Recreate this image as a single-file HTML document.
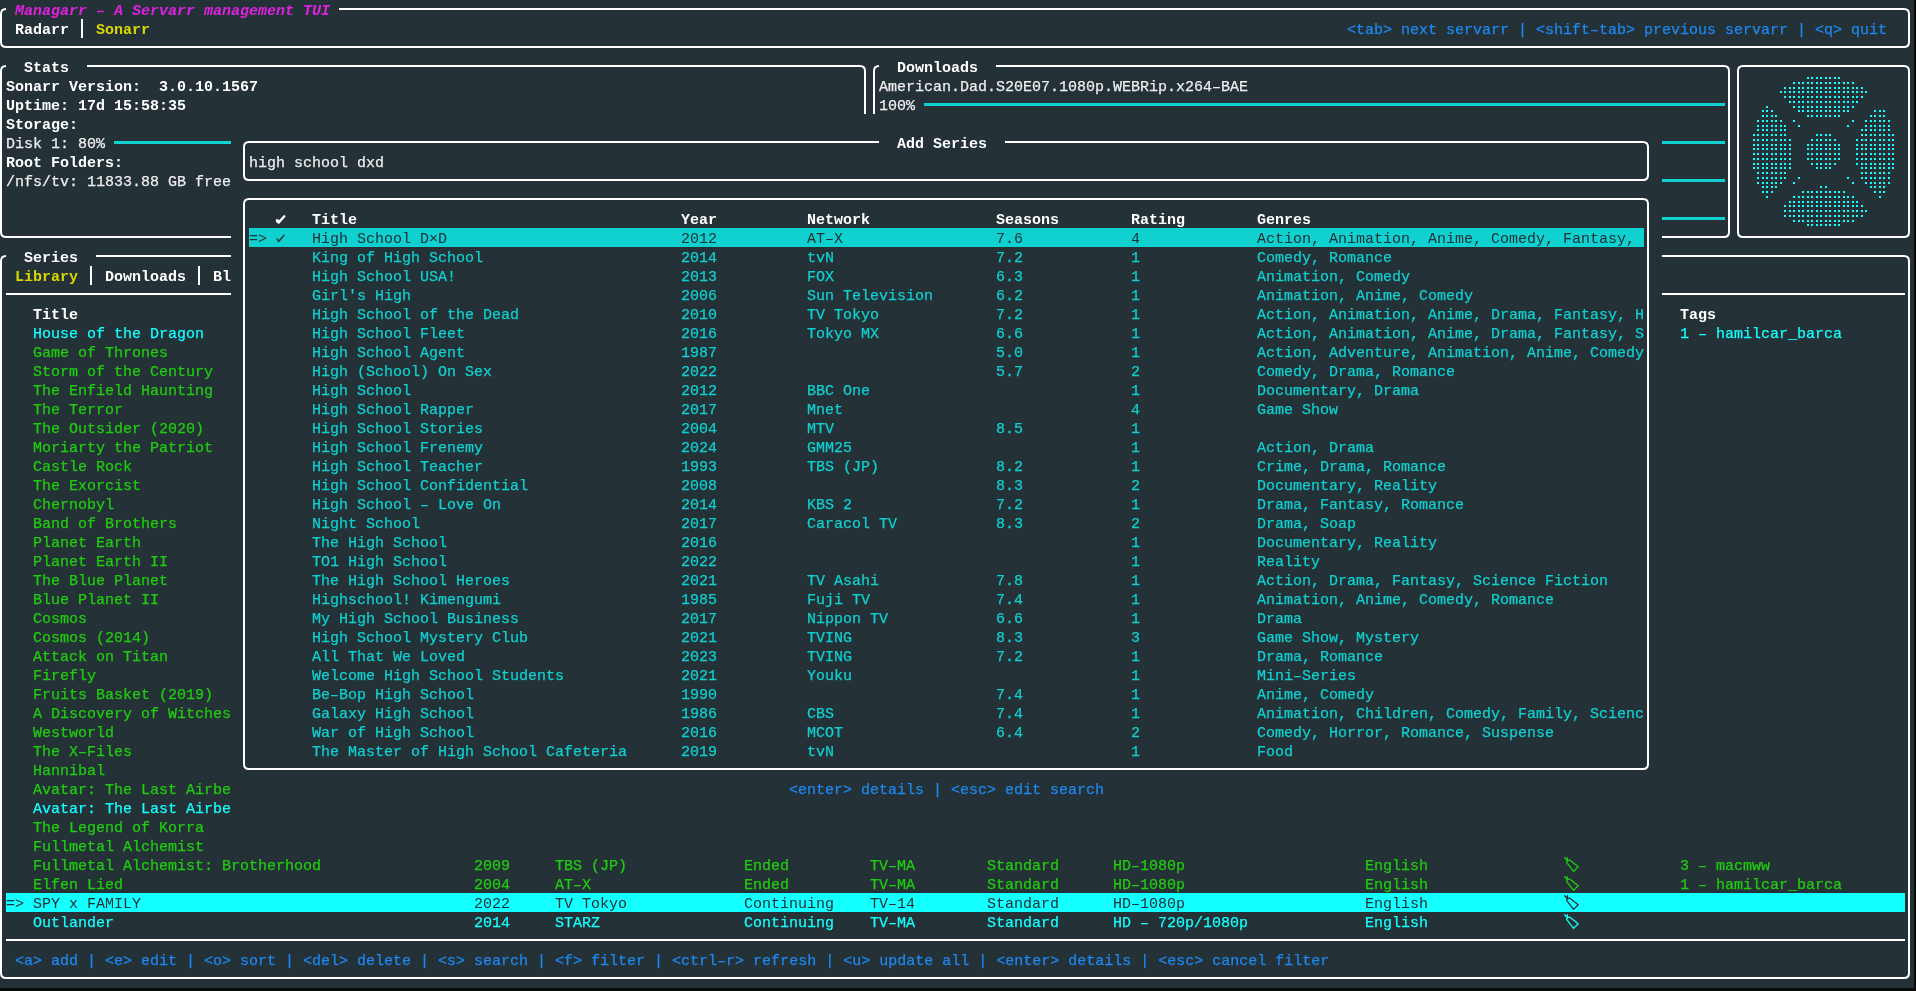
<!DOCTYPE html><html><head><meta charset="utf-8"><title>Managarr</title><style>
html,body{margin:0;padding:0;background:#0b0b0b;}
#s{position:relative;width:1916px;height:991px;overflow:hidden;background:#0b0b0b;}
#t{position:absolute;left:0;top:0;width:1914px;height:988px;background:#243137;overflow:hidden;}
.t{position:absolute;white-space:pre;font-family:"Liberation Mono",monospace;font-size:15px;line-height:19px;}
.t{-webkit-text-stroke:0.25px currentColor}.b{font-weight:bold;-webkit-text-stroke:0}.i{font-style:italic}.d{-webkit-text-stroke:0}
svg{position:absolute;left:0;top:0;}
.r{position:absolute}
#t{will-change:transform}
</style></head><body><div id="s"><div id="t">
<svg width="1914" height="988" viewBox="0 0 1914 988"><g stroke="#ffffff" stroke-width="2" fill="none"><path d="M6,9 H1904 Q1909,9 1909,14 V42 Q1909,47 1904,47 H6 Q1,47 1,42 V14 Q1,9 6,9 Z"/><path d="M82,19 V38"/><path d="M6,66 H860 Q865,66 865,71 V232 Q865,237 860,237 H6 Q1,237 1,232 V71 Q1,66 6,66 Z"/><path d="M879,66 H1724 Q1729,66 1729,71 V232 Q1729,237 1724,237 H879 Q874,237 874,232 V71 Q874,66 879,66 Z"/><path d="M1743,66 H1904 Q1909,66 1909,71 V232 Q1909,237 1904,237 H1743 Q1738,237 1738,232 V71 Q1738,66 1743,66 Z"/><path d="M6,256 H1904 Q1909,256 1909,261 V973 Q1909,978 1904,978 H6 Q1,978 1,973 V261 Q1,256 6,256 Z"/><path d="M91,266 V285"/><path d="M199,266 V285"/><path d="M6,294 H1905"/><path d="M6,940 H1905"/></g><rect x="114" y="141" width="747" height="3" fill="#10d0d0"/><rect x="924" y="103" width="801" height="3" fill="#10d0d0"/><rect x="924" y="141" width="801" height="3" fill="#10d0d0"/><rect x="924" y="179" width="801" height="3" fill="#10d0d0"/><rect x="924" y="217" width="801" height="3" fill="#10d0d0"/><g fill="#14ffff"><rect x="1807" y="77" width="2" height="2"/><rect x="1811" y="77" width="2" height="2"/><rect x="1816" y="77" width="2" height="2"/><rect x="1820" y="77" width="2" height="2"/><rect x="1825" y="77" width="2" height="2"/><rect x="1829" y="77" width="2" height="2"/><rect x="1834" y="77" width="2" height="2"/><rect x="1838" y="77" width="2" height="2"/><rect x="1793" y="82" width="2" height="2"/><rect x="1798" y="82" width="2" height="2"/><rect x="1802" y="82" width="2" height="2"/><rect x="1807" y="82" width="2" height="2"/><rect x="1811" y="82" width="2" height="2"/><rect x="1816" y="82" width="2" height="2"/><rect x="1820" y="82" width="2" height="2"/><rect x="1825" y="82" width="2" height="2"/><rect x="1829" y="82" width="2" height="2"/><rect x="1834" y="82" width="2" height="2"/><rect x="1838" y="82" width="2" height="2"/><rect x="1843" y="82" width="2" height="2"/><rect x="1847" y="82" width="2" height="2"/><rect x="1852" y="82" width="2" height="2"/><rect x="1784" y="87" width="2" height="2"/><rect x="1789" y="87" width="2" height="2"/><rect x="1793" y="87" width="2" height="2"/><rect x="1798" y="87" width="2" height="2"/><rect x="1802" y="87" width="2" height="2"/><rect x="1807" y="87" width="2" height="2"/><rect x="1811" y="87" width="2" height="2"/><rect x="1816" y="87" width="2" height="2"/><rect x="1820" y="87" width="2" height="2"/><rect x="1825" y="87" width="2" height="2"/><rect x="1829" y="87" width="2" height="2"/><rect x="1834" y="87" width="2" height="2"/><rect x="1838" y="87" width="2" height="2"/><rect x="1843" y="87" width="2" height="2"/><rect x="1847" y="87" width="2" height="2"/><rect x="1852" y="87" width="2" height="2"/><rect x="1856" y="87" width="2" height="2"/><rect x="1861" y="87" width="2" height="2"/><rect x="1780" y="91" width="2" height="2"/><rect x="1784" y="91" width="2" height="2"/><rect x="1789" y="91" width="2" height="2"/><rect x="1793" y="91" width="2" height="2"/><rect x="1798" y="91" width="2" height="2"/><rect x="1802" y="91" width="2" height="2"/><rect x="1807" y="91" width="2" height="2"/><rect x="1811" y="91" width="2" height="2"/><rect x="1816" y="91" width="2" height="2"/><rect x="1820" y="91" width="2" height="2"/><rect x="1825" y="91" width="2" height="2"/><rect x="1829" y="91" width="2" height="2"/><rect x="1834" y="91" width="2" height="2"/><rect x="1838" y="91" width="2" height="2"/><rect x="1843" y="91" width="2" height="2"/><rect x="1847" y="91" width="2" height="2"/><rect x="1852" y="91" width="2" height="2"/><rect x="1856" y="91" width="2" height="2"/><rect x="1861" y="91" width="2" height="2"/><rect x="1865" y="91" width="2" height="2"/><rect x="1784" y="96" width="2" height="2"/><rect x="1789" y="96" width="2" height="2"/><rect x="1793" y="96" width="2" height="2"/><rect x="1798" y="96" width="2" height="2"/><rect x="1802" y="96" width="2" height="2"/><rect x="1807" y="96" width="2" height="2"/><rect x="1811" y="96" width="2" height="2"/><rect x="1816" y="96" width="2" height="2"/><rect x="1820" y="96" width="2" height="2"/><rect x="1825" y="96" width="2" height="2"/><rect x="1829" y="96" width="2" height="2"/><rect x="1834" y="96" width="2" height="2"/><rect x="1838" y="96" width="2" height="2"/><rect x="1843" y="96" width="2" height="2"/><rect x="1847" y="96" width="2" height="2"/><rect x="1852" y="96" width="2" height="2"/><rect x="1856" y="96" width="2" height="2"/><rect x="1861" y="96" width="2" height="2"/><rect x="1789" y="101" width="2" height="2"/><rect x="1793" y="101" width="2" height="2"/><rect x="1798" y="101" width="2" height="2"/><rect x="1802" y="101" width="2" height="2"/><rect x="1807" y="101" width="2" height="2"/><rect x="1811" y="101" width="2" height="2"/><rect x="1816" y="101" width="2" height="2"/><rect x="1820" y="101" width="2" height="2"/><rect x="1825" y="101" width="2" height="2"/><rect x="1829" y="101" width="2" height="2"/><rect x="1834" y="101" width="2" height="2"/><rect x="1838" y="101" width="2" height="2"/><rect x="1843" y="101" width="2" height="2"/><rect x="1847" y="101" width="2" height="2"/><rect x="1852" y="101" width="2" height="2"/><rect x="1856" y="101" width="2" height="2"/><rect x="1766" y="106" width="2" height="2"/><rect x="1793" y="106" width="2" height="2"/><rect x="1798" y="106" width="2" height="2"/><rect x="1802" y="106" width="2" height="2"/><rect x="1807" y="106" width="2" height="2"/><rect x="1811" y="106" width="2" height="2"/><rect x="1816" y="106" width="2" height="2"/><rect x="1820" y="106" width="2" height="2"/><rect x="1825" y="106" width="2" height="2"/><rect x="1829" y="106" width="2" height="2"/><rect x="1834" y="106" width="2" height="2"/><rect x="1838" y="106" width="2" height="2"/><rect x="1843" y="106" width="2" height="2"/><rect x="1847" y="106" width="2" height="2"/><rect x="1852" y="106" width="2" height="2"/><rect x="1762" y="110" width="2" height="2"/><rect x="1766" y="110" width="2" height="2"/><rect x="1771" y="110" width="2" height="2"/><rect x="1798" y="110" width="2" height="2"/><rect x="1802" y="110" width="2" height="2"/><rect x="1807" y="110" width="2" height="2"/><rect x="1811" y="110" width="2" height="2"/><rect x="1816" y="110" width="2" height="2"/><rect x="1820" y="110" width="2" height="2"/><rect x="1825" y="110" width="2" height="2"/><rect x="1829" y="110" width="2" height="2"/><rect x="1834" y="110" width="2" height="2"/><rect x="1838" y="110" width="2" height="2"/><rect x="1843" y="110" width="2" height="2"/><rect x="1847" y="110" width="2" height="2"/><rect x="1874" y="110" width="2" height="2"/><rect x="1879" y="110" width="2" height="2"/><rect x="1883" y="110" width="2" height="2"/><rect x="1762" y="115" width="2" height="2"/><rect x="1766" y="115" width="2" height="2"/><rect x="1771" y="115" width="2" height="2"/><rect x="1775" y="115" width="2" height="2"/><rect x="1807" y="115" width="2" height="2"/><rect x="1811" y="115" width="2" height="2"/><rect x="1816" y="115" width="2" height="2"/><rect x="1820" y="115" width="2" height="2"/><rect x="1825" y="115" width="2" height="2"/><rect x="1829" y="115" width="2" height="2"/><rect x="1834" y="115" width="2" height="2"/><rect x="1838" y="115" width="2" height="2"/><rect x="1870" y="115" width="2" height="2"/><rect x="1874" y="115" width="2" height="2"/><rect x="1879" y="115" width="2" height="2"/><rect x="1883" y="115" width="2" height="2"/><rect x="1757" y="120" width="2" height="2"/><rect x="1762" y="120" width="2" height="2"/><rect x="1766" y="120" width="2" height="2"/><rect x="1771" y="120" width="2" height="2"/><rect x="1775" y="120" width="2" height="2"/><rect x="1780" y="120" width="2" height="2"/><rect x="1793" y="120" width="2" height="2"/><rect x="1852" y="120" width="2" height="2"/><rect x="1865" y="120" width="2" height="2"/><rect x="1870" y="120" width="2" height="2"/><rect x="1874" y="120" width="2" height="2"/><rect x="1879" y="120" width="2" height="2"/><rect x="1883" y="120" width="2" height="2"/><rect x="1888" y="120" width="2" height="2"/><rect x="1757" y="125" width="2" height="2"/><rect x="1762" y="125" width="2" height="2"/><rect x="1766" y="125" width="2" height="2"/><rect x="1771" y="125" width="2" height="2"/><rect x="1775" y="125" width="2" height="2"/><rect x="1780" y="125" width="2" height="2"/><rect x="1784" y="125" width="2" height="2"/><rect x="1798" y="125" width="2" height="2"/><rect x="1847" y="125" width="2" height="2"/><rect x="1865" y="125" width="2" height="2"/><rect x="1870" y="125" width="2" height="2"/><rect x="1874" y="125" width="2" height="2"/><rect x="1879" y="125" width="2" height="2"/><rect x="1883" y="125" width="2" height="2"/><rect x="1888" y="125" width="2" height="2"/><rect x="1757" y="129" width="2" height="2"/><rect x="1762" y="129" width="2" height="2"/><rect x="1766" y="129" width="2" height="2"/><rect x="1771" y="129" width="2" height="2"/><rect x="1775" y="129" width="2" height="2"/><rect x="1780" y="129" width="2" height="2"/><rect x="1784" y="129" width="2" height="2"/><rect x="1861" y="129" width="2" height="2"/><rect x="1865" y="129" width="2" height="2"/><rect x="1870" y="129" width="2" height="2"/><rect x="1874" y="129" width="2" height="2"/><rect x="1879" y="129" width="2" height="2"/><rect x="1883" y="129" width="2" height="2"/><rect x="1888" y="129" width="2" height="2"/><rect x="1753" y="134" width="2" height="2"/><rect x="1757" y="134" width="2" height="2"/><rect x="1762" y="134" width="2" height="2"/><rect x="1766" y="134" width="2" height="2"/><rect x="1771" y="134" width="2" height="2"/><rect x="1775" y="134" width="2" height="2"/><rect x="1780" y="134" width="2" height="2"/><rect x="1784" y="134" width="2" height="2"/><rect x="1816" y="134" width="2" height="2"/><rect x="1820" y="134" width="2" height="2"/><rect x="1825" y="134" width="2" height="2"/><rect x="1829" y="134" width="2" height="2"/><rect x="1861" y="134" width="2" height="2"/><rect x="1865" y="134" width="2" height="2"/><rect x="1870" y="134" width="2" height="2"/><rect x="1874" y="134" width="2" height="2"/><rect x="1879" y="134" width="2" height="2"/><rect x="1883" y="134" width="2" height="2"/><rect x="1888" y="134" width="2" height="2"/><rect x="1892" y="134" width="2" height="2"/><rect x="1753" y="139" width="2" height="2"/><rect x="1757" y="139" width="2" height="2"/><rect x="1762" y="139" width="2" height="2"/><rect x="1766" y="139" width="2" height="2"/><rect x="1771" y="139" width="2" height="2"/><rect x="1775" y="139" width="2" height="2"/><rect x="1780" y="139" width="2" height="2"/><rect x="1784" y="139" width="2" height="2"/><rect x="1789" y="139" width="2" height="2"/><rect x="1811" y="139" width="2" height="2"/><rect x="1816" y="139" width="2" height="2"/><rect x="1820" y="139" width="2" height="2"/><rect x="1825" y="139" width="2" height="2"/><rect x="1829" y="139" width="2" height="2"/><rect x="1834" y="139" width="2" height="2"/><rect x="1856" y="139" width="2" height="2"/><rect x="1861" y="139" width="2" height="2"/><rect x="1865" y="139" width="2" height="2"/><rect x="1870" y="139" width="2" height="2"/><rect x="1874" y="139" width="2" height="2"/><rect x="1879" y="139" width="2" height="2"/><rect x="1883" y="139" width="2" height="2"/><rect x="1888" y="139" width="2" height="2"/><rect x="1892" y="139" width="2" height="2"/><rect x="1753" y="144" width="2" height="2"/><rect x="1757" y="144" width="2" height="2"/><rect x="1762" y="144" width="2" height="2"/><rect x="1766" y="144" width="2" height="2"/><rect x="1771" y="144" width="2" height="2"/><rect x="1775" y="144" width="2" height="2"/><rect x="1780" y="144" width="2" height="2"/><rect x="1784" y="144" width="2" height="2"/><rect x="1789" y="144" width="2" height="2"/><rect x="1807" y="144" width="2" height="2"/><rect x="1811" y="144" width="2" height="2"/><rect x="1816" y="144" width="2" height="2"/><rect x="1820" y="144" width="2" height="2"/><rect x="1825" y="144" width="2" height="2"/><rect x="1829" y="144" width="2" height="2"/><rect x="1834" y="144" width="2" height="2"/><rect x="1838" y="144" width="2" height="2"/><rect x="1856" y="144" width="2" height="2"/><rect x="1861" y="144" width="2" height="2"/><rect x="1865" y="144" width="2" height="2"/><rect x="1870" y="144" width="2" height="2"/><rect x="1874" y="144" width="2" height="2"/><rect x="1879" y="144" width="2" height="2"/><rect x="1883" y="144" width="2" height="2"/><rect x="1888" y="144" width="2" height="2"/><rect x="1892" y="144" width="2" height="2"/><rect x="1753" y="148" width="2" height="2"/><rect x="1757" y="148" width="2" height="2"/><rect x="1762" y="148" width="2" height="2"/><rect x="1766" y="148" width="2" height="2"/><rect x="1771" y="148" width="2" height="2"/><rect x="1775" y="148" width="2" height="2"/><rect x="1780" y="148" width="2" height="2"/><rect x="1784" y="148" width="2" height="2"/><rect x="1789" y="148" width="2" height="2"/><rect x="1807" y="148" width="2" height="2"/><rect x="1811" y="148" width="2" height="2"/><rect x="1816" y="148" width="2" height="2"/><rect x="1820" y="148" width="2" height="2"/><rect x="1825" y="148" width="2" height="2"/><rect x="1829" y="148" width="2" height="2"/><rect x="1834" y="148" width="2" height="2"/><rect x="1838" y="148" width="2" height="2"/><rect x="1856" y="148" width="2" height="2"/><rect x="1861" y="148" width="2" height="2"/><rect x="1865" y="148" width="2" height="2"/><rect x="1870" y="148" width="2" height="2"/><rect x="1874" y="148" width="2" height="2"/><rect x="1879" y="148" width="2" height="2"/><rect x="1883" y="148" width="2" height="2"/><rect x="1888" y="148" width="2" height="2"/><rect x="1892" y="148" width="2" height="2"/><rect x="1753" y="153" width="2" height="2"/><rect x="1757" y="153" width="2" height="2"/><rect x="1762" y="153" width="2" height="2"/><rect x="1766" y="153" width="2" height="2"/><rect x="1771" y="153" width="2" height="2"/><rect x="1775" y="153" width="2" height="2"/><rect x="1780" y="153" width="2" height="2"/><rect x="1784" y="153" width="2" height="2"/><rect x="1789" y="153" width="2" height="2"/><rect x="1807" y="153" width="2" height="2"/><rect x="1811" y="153" width="2" height="2"/><rect x="1816" y="153" width="2" height="2"/><rect x="1820" y="153" width="2" height="2"/><rect x="1825" y="153" width="2" height="2"/><rect x="1829" y="153" width="2" height="2"/><rect x="1834" y="153" width="2" height="2"/><rect x="1838" y="153" width="2" height="2"/><rect x="1856" y="153" width="2" height="2"/><rect x="1861" y="153" width="2" height="2"/><rect x="1865" y="153" width="2" height="2"/><rect x="1870" y="153" width="2" height="2"/><rect x="1874" y="153" width="2" height="2"/><rect x="1879" y="153" width="2" height="2"/><rect x="1883" y="153" width="2" height="2"/><rect x="1888" y="153" width="2" height="2"/><rect x="1892" y="153" width="2" height="2"/><rect x="1753" y="158" width="2" height="2"/><rect x="1757" y="158" width="2" height="2"/><rect x="1762" y="158" width="2" height="2"/><rect x="1766" y="158" width="2" height="2"/><rect x="1771" y="158" width="2" height="2"/><rect x="1775" y="158" width="2" height="2"/><rect x="1780" y="158" width="2" height="2"/><rect x="1784" y="158" width="2" height="2"/><rect x="1789" y="158" width="2" height="2"/><rect x="1807" y="158" width="2" height="2"/><rect x="1811" y="158" width="2" height="2"/><rect x="1816" y="158" width="2" height="2"/><rect x="1820" y="158" width="2" height="2"/><rect x="1825" y="158" width="2" height="2"/><rect x="1829" y="158" width="2" height="2"/><rect x="1834" y="158" width="2" height="2"/><rect x="1838" y="158" width="2" height="2"/><rect x="1856" y="158" width="2" height="2"/><rect x="1861" y="158" width="2" height="2"/><rect x="1865" y="158" width="2" height="2"/><rect x="1870" y="158" width="2" height="2"/><rect x="1874" y="158" width="2" height="2"/><rect x="1879" y="158" width="2" height="2"/><rect x="1883" y="158" width="2" height="2"/><rect x="1888" y="158" width="2" height="2"/><rect x="1892" y="158" width="2" height="2"/><rect x="1753" y="163" width="2" height="2"/><rect x="1757" y="163" width="2" height="2"/><rect x="1762" y="163" width="2" height="2"/><rect x="1766" y="163" width="2" height="2"/><rect x="1771" y="163" width="2" height="2"/><rect x="1775" y="163" width="2" height="2"/><rect x="1780" y="163" width="2" height="2"/><rect x="1784" y="163" width="2" height="2"/><rect x="1789" y="163" width="2" height="2"/><rect x="1811" y="163" width="2" height="2"/><rect x="1816" y="163" width="2" height="2"/><rect x="1820" y="163" width="2" height="2"/><rect x="1825" y="163" width="2" height="2"/><rect x="1829" y="163" width="2" height="2"/><rect x="1834" y="163" width="2" height="2"/><rect x="1856" y="163" width="2" height="2"/><rect x="1861" y="163" width="2" height="2"/><rect x="1865" y="163" width="2" height="2"/><rect x="1870" y="163" width="2" height="2"/><rect x="1874" y="163" width="2" height="2"/><rect x="1879" y="163" width="2" height="2"/><rect x="1883" y="163" width="2" height="2"/><rect x="1888" y="163" width="2" height="2"/><rect x="1892" y="163" width="2" height="2"/><rect x="1753" y="167" width="2" height="2"/><rect x="1757" y="167" width="2" height="2"/><rect x="1762" y="167" width="2" height="2"/><rect x="1766" y="167" width="2" height="2"/><rect x="1771" y="167" width="2" height="2"/><rect x="1775" y="167" width="2" height="2"/><rect x="1780" y="167" width="2" height="2"/><rect x="1784" y="167" width="2" height="2"/><rect x="1789" y="167" width="2" height="2"/><rect x="1816" y="167" width="2" height="2"/><rect x="1820" y="167" width="2" height="2"/><rect x="1825" y="167" width="2" height="2"/><rect x="1829" y="167" width="2" height="2"/><rect x="1861" y="167" width="2" height="2"/><rect x="1865" y="167" width="2" height="2"/><rect x="1870" y="167" width="2" height="2"/><rect x="1874" y="167" width="2" height="2"/><rect x="1879" y="167" width="2" height="2"/><rect x="1883" y="167" width="2" height="2"/><rect x="1888" y="167" width="2" height="2"/><rect x="1892" y="167" width="2" height="2"/><rect x="1757" y="172" width="2" height="2"/><rect x="1762" y="172" width="2" height="2"/><rect x="1766" y="172" width="2" height="2"/><rect x="1771" y="172" width="2" height="2"/><rect x="1775" y="172" width="2" height="2"/><rect x="1780" y="172" width="2" height="2"/><rect x="1784" y="172" width="2" height="2"/><rect x="1861" y="172" width="2" height="2"/><rect x="1865" y="172" width="2" height="2"/><rect x="1870" y="172" width="2" height="2"/><rect x="1874" y="172" width="2" height="2"/><rect x="1879" y="172" width="2" height="2"/><rect x="1883" y="172" width="2" height="2"/><rect x="1888" y="172" width="2" height="2"/><rect x="1757" y="177" width="2" height="2"/><rect x="1762" y="177" width="2" height="2"/><rect x="1766" y="177" width="2" height="2"/><rect x="1771" y="177" width="2" height="2"/><rect x="1775" y="177" width="2" height="2"/><rect x="1780" y="177" width="2" height="2"/><rect x="1784" y="177" width="2" height="2"/><rect x="1798" y="177" width="2" height="2"/><rect x="1847" y="177" width="2" height="2"/><rect x="1861" y="177" width="2" height="2"/><rect x="1865" y="177" width="2" height="2"/><rect x="1870" y="177" width="2" height="2"/><rect x="1874" y="177" width="2" height="2"/><rect x="1879" y="177" width="2" height="2"/><rect x="1883" y="177" width="2" height="2"/><rect x="1888" y="177" width="2" height="2"/><rect x="1757" y="182" width="2" height="2"/><rect x="1762" y="182" width="2" height="2"/><rect x="1766" y="182" width="2" height="2"/><rect x="1771" y="182" width="2" height="2"/><rect x="1775" y="182" width="2" height="2"/><rect x="1780" y="182" width="2" height="2"/><rect x="1793" y="182" width="2" height="2"/><rect x="1852" y="182" width="2" height="2"/><rect x="1865" y="182" width="2" height="2"/><rect x="1870" y="182" width="2" height="2"/><rect x="1874" y="182" width="2" height="2"/><rect x="1879" y="182" width="2" height="2"/><rect x="1883" y="182" width="2" height="2"/><rect x="1888" y="182" width="2" height="2"/><rect x="1762" y="186" width="2" height="2"/><rect x="1766" y="186" width="2" height="2"/><rect x="1771" y="186" width="2" height="2"/><rect x="1775" y="186" width="2" height="2"/><rect x="1820" y="186" width="2" height="2"/><rect x="1825" y="186" width="2" height="2"/><rect x="1870" y="186" width="2" height="2"/><rect x="1874" y="186" width="2" height="2"/><rect x="1879" y="186" width="2" height="2"/><rect x="1883" y="186" width="2" height="2"/><rect x="1762" y="191" width="2" height="2"/><rect x="1766" y="191" width="2" height="2"/><rect x="1771" y="191" width="2" height="2"/><rect x="1802" y="191" width="2" height="2"/><rect x="1807" y="191" width="2" height="2"/><rect x="1811" y="191" width="2" height="2"/><rect x="1816" y="191" width="2" height="2"/><rect x="1820" y="191" width="2" height="2"/><rect x="1825" y="191" width="2" height="2"/><rect x="1829" y="191" width="2" height="2"/><rect x="1834" y="191" width="2" height="2"/><rect x="1838" y="191" width="2" height="2"/><rect x="1843" y="191" width="2" height="2"/><rect x="1874" y="191" width="2" height="2"/><rect x="1879" y="191" width="2" height="2"/><rect x="1883" y="191" width="2" height="2"/><rect x="1766" y="196" width="2" height="2"/><rect x="1793" y="196" width="2" height="2"/><rect x="1798" y="196" width="2" height="2"/><rect x="1802" y="196" width="2" height="2"/><rect x="1807" y="196" width="2" height="2"/><rect x="1811" y="196" width="2" height="2"/><rect x="1816" y="196" width="2" height="2"/><rect x="1820" y="196" width="2" height="2"/><rect x="1825" y="196" width="2" height="2"/><rect x="1829" y="196" width="2" height="2"/><rect x="1834" y="196" width="2" height="2"/><rect x="1838" y="196" width="2" height="2"/><rect x="1843" y="196" width="2" height="2"/><rect x="1847" y="196" width="2" height="2"/><rect x="1852" y="196" width="2" height="2"/><rect x="1879" y="196" width="2" height="2"/><rect x="1789" y="201" width="2" height="2"/><rect x="1793" y="201" width="2" height="2"/><rect x="1798" y="201" width="2" height="2"/><rect x="1802" y="201" width="2" height="2"/><rect x="1807" y="201" width="2" height="2"/><rect x="1811" y="201" width="2" height="2"/><rect x="1816" y="201" width="2" height="2"/><rect x="1820" y="201" width="2" height="2"/><rect x="1825" y="201" width="2" height="2"/><rect x="1829" y="201" width="2" height="2"/><rect x="1834" y="201" width="2" height="2"/><rect x="1838" y="201" width="2" height="2"/><rect x="1843" y="201" width="2" height="2"/><rect x="1847" y="201" width="2" height="2"/><rect x="1852" y="201" width="2" height="2"/><rect x="1856" y="201" width="2" height="2"/><rect x="1784" y="205" width="2" height="2"/><rect x="1789" y="205" width="2" height="2"/><rect x="1793" y="205" width="2" height="2"/><rect x="1798" y="205" width="2" height="2"/><rect x="1802" y="205" width="2" height="2"/><rect x="1807" y="205" width="2" height="2"/><rect x="1811" y="205" width="2" height="2"/><rect x="1816" y="205" width="2" height="2"/><rect x="1820" y="205" width="2" height="2"/><rect x="1825" y="205" width="2" height="2"/><rect x="1829" y="205" width="2" height="2"/><rect x="1834" y="205" width="2" height="2"/><rect x="1838" y="205" width="2" height="2"/><rect x="1843" y="205" width="2" height="2"/><rect x="1847" y="205" width="2" height="2"/><rect x="1852" y="205" width="2" height="2"/><rect x="1856" y="205" width="2" height="2"/><rect x="1861" y="205" width="2" height="2"/><rect x="1784" y="210" width="2" height="2"/><rect x="1789" y="210" width="2" height="2"/><rect x="1793" y="210" width="2" height="2"/><rect x="1798" y="210" width="2" height="2"/><rect x="1802" y="210" width="2" height="2"/><rect x="1807" y="210" width="2" height="2"/><rect x="1811" y="210" width="2" height="2"/><rect x="1816" y="210" width="2" height="2"/><rect x="1820" y="210" width="2" height="2"/><rect x="1825" y="210" width="2" height="2"/><rect x="1829" y="210" width="2" height="2"/><rect x="1834" y="210" width="2" height="2"/><rect x="1838" y="210" width="2" height="2"/><rect x="1843" y="210" width="2" height="2"/><rect x="1847" y="210" width="2" height="2"/><rect x="1852" y="210" width="2" height="2"/><rect x="1856" y="210" width="2" height="2"/><rect x="1861" y="210" width="2" height="2"/><rect x="1865" y="210" width="2" height="2"/><rect x="1784" y="215" width="2" height="2"/><rect x="1789" y="215" width="2" height="2"/><rect x="1793" y="215" width="2" height="2"/><rect x="1798" y="215" width="2" height="2"/><rect x="1802" y="215" width="2" height="2"/><rect x="1807" y="215" width="2" height="2"/><rect x="1811" y="215" width="2" height="2"/><rect x="1816" y="215" width="2" height="2"/><rect x="1820" y="215" width="2" height="2"/><rect x="1825" y="215" width="2" height="2"/><rect x="1829" y="215" width="2" height="2"/><rect x="1834" y="215" width="2" height="2"/><rect x="1838" y="215" width="2" height="2"/><rect x="1843" y="215" width="2" height="2"/><rect x="1847" y="215" width="2" height="2"/><rect x="1852" y="215" width="2" height="2"/><rect x="1856" y="215" width="2" height="2"/><rect x="1861" y="215" width="2" height="2"/><rect x="1793" y="220" width="2" height="2"/><rect x="1798" y="220" width="2" height="2"/><rect x="1802" y="220" width="2" height="2"/><rect x="1807" y="220" width="2" height="2"/><rect x="1811" y="220" width="2" height="2"/><rect x="1816" y="220" width="2" height="2"/><rect x="1820" y="220" width="2" height="2"/><rect x="1825" y="220" width="2" height="2"/><rect x="1829" y="220" width="2" height="2"/><rect x="1834" y="220" width="2" height="2"/><rect x="1838" y="220" width="2" height="2"/><rect x="1843" y="220" width="2" height="2"/><rect x="1847" y="220" width="2" height="2"/><rect x="1852" y="220" width="2" height="2"/><rect x="1807" y="224" width="2" height="2"/><rect x="1811" y="224" width="2" height="2"/><rect x="1816" y="224" width="2" height="2"/><rect x="1820" y="224" width="2" height="2"/><rect x="1825" y="224" width="2" height="2"/><rect x="1829" y="224" width="2" height="2"/><rect x="1834" y="224" width="2" height="2"/><rect x="1838" y="224" width="2" height="2"/></g></svg>
<div class="r" style="left:6px;top:6px;width:333px;height:6px;background:#243137"></div>
<div class="r" style="left:6px;top:63px;width:81px;height:6px;background:#243137"></div>
<div class="r" style="left:879px;top:63px;width:117px;height:6px;background:#243137"></div>
<div class="r" style="left:6px;top:253px;width:90px;height:6px;background:#243137"></div>
<div class="r" style="left:6px;top:893px;width:1899px;height:19px;background:#14ffff"></div>
<span class="t b i" style="left:15px;top:2px;color:#e020e0">Managarr – A Servarr management TUI</span>
<span class="t b" style="left:15px;top:21px;color:#ffffff">Radarr</span>
<span class="t b" style="left:96px;top:21px;color:#d8d800">Sonarr</span>
<span class="t" style="left:1347px;top:21px;color:#1e88f0">&lt;tab&gt; next servarr | &lt;shift–tab&gt; previous servarr | &lt;q&gt; quit</span>
<span class="t b" style="left:24px;top:59px;color:#ffffff">Stats</span>
<span class="t b" style="left:6px;top:78px;color:#ffffff">Sonarr Version:  3.0.10.1567</span>
<span class="t b" style="left:6px;top:97px;color:#ffffff">Uptime: 17d 15:58:35</span>
<span class="t b" style="left:6px;top:116px;color:#ffffff">Storage:</span>
<span class="t" style="left:6px;top:135px;color:#eeeeee">Disk 1: 80%</span>
<span class="t b" style="left:6px;top:154px;color:#ffffff">Root Folders:</span>
<span class="t" style="left:6px;top:173px;color:#eeeeee">/nfs/tv: 11833.88 GB free</span>
<span class="t b" style="left:897px;top:59px;color:#ffffff">Downloads</span>
<span class="t" style="left:879px;top:78px;color:#eeeeee">American.Dad.S20E07.1080p.WEBRip.x264–BAE</span>
<span class="t" style="left:879px;top:97px;color:#eeeeee">100%</span>
<span class="t b" style="left:24px;top:249px;color:#ffffff">Series</span>
<span class="t b" style="left:15px;top:268px;color:#d8d800">Library</span>
<span class="t b" style="left:105px;top:268px;color:#ffffff">Downloads</span>
<span class="t b" style="left:213px;top:268px;color:#ffffff">Blocklist</span>
<span class="t b" style="left:33px;top:306px;color:#ffffff">Title</span>
<span class="t b" style="left:1680px;top:306px;color:#ffffff">Tags</span>
<span class="t" style="left:33px;top:325px;color:#14ffff">House of the Dragon</span>
<span class="t" style="left:33px;top:344px;color:#20cc10">Game of Thrones</span>
<span class="t" style="left:33px;top:363px;color:#20cc10">Storm of the Century</span>
<span class="t" style="left:33px;top:382px;color:#20cc10">The Enfield Haunting</span>
<span class="t" style="left:33px;top:401px;color:#20cc10">The Terror</span>
<span class="t" style="left:33px;top:420px;color:#20cc10">The Outsider (2020)</span>
<span class="t" style="left:33px;top:439px;color:#20cc10">Moriarty the Patriot</span>
<span class="t" style="left:33px;top:458px;color:#20cc10">Castle Rock</span>
<span class="t" style="left:33px;top:477px;color:#20cc10">The Exorcist</span>
<span class="t" style="left:33px;top:496px;color:#20cc10">Chernobyl</span>
<span class="t" style="left:33px;top:515px;color:#20cc10">Band of Brothers</span>
<span class="t" style="left:33px;top:534px;color:#20cc10">Planet Earth</span>
<span class="t" style="left:33px;top:553px;color:#20cc10">Planet Earth II</span>
<span class="t" style="left:33px;top:572px;color:#20cc10">The Blue Planet</span>
<span class="t" style="left:33px;top:591px;color:#20cc10">Blue Planet II</span>
<span class="t" style="left:33px;top:610px;color:#20cc10">Cosmos</span>
<span class="t" style="left:33px;top:629px;color:#20cc10">Cosmos (2014)</span>
<span class="t" style="left:33px;top:648px;color:#20cc10">Attack on Titan</span>
<span class="t" style="left:33px;top:667px;color:#20cc10">Firefly</span>
<span class="t" style="left:33px;top:686px;color:#20cc10">Fruits Basket (2019)</span>
<span class="t" style="left:33px;top:705px;color:#20cc10">A Discovery of Witches</span>
<span class="t" style="left:33px;top:724px;color:#20cc10">Westworld</span>
<span class="t" style="left:33px;top:743px;color:#20cc10">The X–Files</span>
<span class="t" style="left:33px;top:762px;color:#20cc10">Hannibal</span>
<span class="t" style="left:33px;top:781px;color:#20cc10">Avatar: The Last Airbe</span>
<span class="t" style="left:33px;top:800px;color:#14ffff">Avatar: The Last Airbe</span>
<span class="t" style="left:33px;top:819px;color:#20cc10">The Legend of Korra</span>
<span class="t" style="left:33px;top:838px;color:#20cc10">Fullmetal Alchemist</span>
<span class="t" style="left:1680px;top:325px;color:#14ffff">1 – hamilcar_barca</span>
<span class="t d" style="left:6px;top:895px;color:#243137">=&gt;</span>
<span class="t" style="left:33px;top:857px;color:#20cc10">Fullmetal Alchemist: Brotherhood</span>
<span class="t" style="left:474px;top:857px;color:#20cc10">2009</span>
<span class="t" style="left:555px;top:857px;color:#20cc10">TBS (JP)</span>
<span class="t" style="left:744px;top:857px;color:#20cc10">Ended</span>
<span class="t" style="left:870px;top:857px;color:#20cc10">TV–MA</span>
<span class="t" style="left:987px;top:857px;color:#20cc10">Standard</span>
<span class="t" style="left:1113px;top:857px;color:#20cc10">HD–1080p</span>
<span class="t" style="left:1365px;top:857px;color:#20cc10">English</span>
<span class="t" style="left:1680px;top:857px;color:#20cc10">3 – macmww</span>
<span class="t" style="left:33px;top:876px;color:#20cc10">Elfen Lied</span>
<span class="t" style="left:474px;top:876px;color:#20cc10">2004</span>
<span class="t" style="left:555px;top:876px;color:#20cc10">AT–X</span>
<span class="t" style="left:744px;top:876px;color:#20cc10">Ended</span>
<span class="t" style="left:870px;top:876px;color:#20cc10">TV–MA</span>
<span class="t" style="left:987px;top:876px;color:#20cc10">Standard</span>
<span class="t" style="left:1113px;top:876px;color:#20cc10">HD–1080p</span>
<span class="t" style="left:1365px;top:876px;color:#20cc10">English</span>
<span class="t" style="left:1680px;top:876px;color:#20cc10">1 – hamilcar_barca</span>
<span class="t d" style="left:33px;top:895px;color:#243137">SPY x FAMILY</span>
<span class="t d" style="left:474px;top:895px;color:#243137">2022</span>
<span class="t d" style="left:555px;top:895px;color:#243137">TV Tokyo</span>
<span class="t d" style="left:744px;top:895px;color:#243137">Continuing</span>
<span class="t d" style="left:870px;top:895px;color:#243137">TV–14</span>
<span class="t d" style="left:987px;top:895px;color:#243137">Standard</span>
<span class="t d" style="left:1113px;top:895px;color:#243137">HD–1080p</span>
<span class="t d" style="left:1365px;top:895px;color:#243137">English</span>
<span class="t" style="left:33px;top:914px;color:#14ffff">Outlander</span>
<span class="t" style="left:474px;top:914px;color:#14ffff">2014</span>
<span class="t" style="left:555px;top:914px;color:#14ffff">STARZ</span>
<span class="t" style="left:744px;top:914px;color:#14ffff">Continuing</span>
<span class="t" style="left:870px;top:914px;color:#14ffff">TV–MA</span>
<span class="t" style="left:987px;top:914px;color:#14ffff">Standard</span>
<span class="t" style="left:1113px;top:914px;color:#14ffff">HD – 720p/1080p</span>
<span class="t" style="left:1365px;top:914px;color:#14ffff">English</span>
<span class="t" style="left:15px;top:952px;color:#1e88f0">&lt;a&gt; add | &lt;e&gt; edit | &lt;o&gt; sort | &lt;del&gt; delete | &lt;s&gt; search | &lt;f&gt; filter | &lt;ctrl–r&gt; refresh | &lt;u&gt; update all | &lt;enter&gt; details | &lt;esc&gt; cancel filter</span>
<svg width="1914" height="988" viewBox="0 0 1914 988"><g transform="translate(1564,857)" stroke="#20cc10" stroke-width="1.3" fill="none" stroke-linejoin="round" stroke-linecap="round"><path d="M2.6,5.4 Q2.6,3.6 4.2,3.4 L5.6,3.0 L14.2,9.8 L9.6,14.4 Z"/><path d="M0.6,0.8 L3.6,3.8 M3.3,0.6 L3.6,3.8"/></g><g transform="translate(1564,876)" stroke="#20cc10" stroke-width="1.3" fill="none" stroke-linejoin="round" stroke-linecap="round"><path d="M2.6,5.4 Q2.6,3.6 4.2,3.4 L5.6,3.0 L14.2,9.8 L9.6,14.4 Z"/><path d="M0.6,0.8 L3.6,3.8 M3.3,0.6 L3.6,3.8"/></g><g transform="translate(1564,895)" stroke="#243137" stroke-width="1.3" fill="none" stroke-linejoin="round" stroke-linecap="round"><path d="M2.6,5.4 Q2.6,3.6 4.2,3.4 L5.6,3.0 L14.2,9.8 L9.6,14.4 Z"/><path d="M0.6,0.8 L3.6,3.8 M3.3,0.6 L3.6,3.8"/></g><g transform="translate(1564,914)" stroke="#14ffff" stroke-width="1.3" fill="none" stroke-linejoin="round" stroke-linecap="round"><path d="M2.6,5.4 Q2.6,3.6 4.2,3.4 L5.6,3.0 L14.2,9.8 L9.6,14.4 Z"/><path d="M0.6,0.8 L3.6,3.8 M3.3,0.6 L3.6,3.8"/></g></svg>
<div class="r" style="left:231px;top:114px;width:1431px;height:741px;background:#243137"></div>
<svg width="1914" height="988" viewBox="0 0 1914 988"><g stroke="#ffffff" stroke-width="2" fill="none"><path d="M249,142 H1643 Q1648,142 1648,147 V175 Q1648,180 1643,180 H249 Q244,180 244,175 V147 Q244,142 249,142 Z"/><path d="M249,199 H1643 Q1648,199 1648,204 V764 Q1648,769 1643,769 H249 Q244,769 244,764 V204 Q244,199 249,199 Z"/></g></svg>
<div class="r" style="left:879px;top:139px;width:126px;height:6px;background:#243137"></div>
<div class="r" style="left:249px;top:228px;width:1395px;height:19px;background:#10d0d0"></div>
<span class="t b" style="left:897px;top:135px;color:#ffffff">Add Series</span>
<span class="t" style="left:249px;top:154px;color:#eeeeee">high school dxd</span>
<span class="t b" style="left:312px;top:211px;color:#ffffff">Title</span>
<span class="t b" style="left:681px;top:211px;color:#ffffff">Year</span>
<span class="t b" style="left:807px;top:211px;color:#ffffff">Network</span>
<span class="t b" style="left:996px;top:211px;color:#ffffff">Seasons</span>
<span class="t b" style="left:1131px;top:211px;color:#ffffff">Rating</span>
<span class="t b" style="left:1257px;top:211px;color:#ffffff">Genres</span>
<span class="t d" style="left:312px;top:230px;color:#243137">High School D×D</span>
<span class="t d" style="left:681px;top:230px;color:#243137">2012</span>
<span class="t d" style="left:807px;top:230px;color:#243137">AT–X</span>
<span class="t d" style="left:996px;top:230px;color:#243137">7.6</span>
<span class="t d" style="left:1131px;top:230px;color:#243137">4</span>
<span class="t d" style="left:1257px;top:230px;color:#243137">Action, Animation, Anime, Comedy, Fantasy, </span>
<span class="t" style="left:312px;top:249px;color:#10d0d0">King of High School</span>
<span class="t" style="left:681px;top:249px;color:#10d0d0">2014</span>
<span class="t" style="left:807px;top:249px;color:#10d0d0">tvN</span>
<span class="t" style="left:996px;top:249px;color:#10d0d0">7.2</span>
<span class="t" style="left:1131px;top:249px;color:#10d0d0">1</span>
<span class="t" style="left:1257px;top:249px;color:#10d0d0">Comedy, Romance</span>
<span class="t" style="left:312px;top:268px;color:#10d0d0">High School USA!</span>
<span class="t" style="left:681px;top:268px;color:#10d0d0">2013</span>
<span class="t" style="left:807px;top:268px;color:#10d0d0">FOX</span>
<span class="t" style="left:996px;top:268px;color:#10d0d0">6.3</span>
<span class="t" style="left:1131px;top:268px;color:#10d0d0">1</span>
<span class="t" style="left:1257px;top:268px;color:#10d0d0">Animation, Comedy</span>
<span class="t" style="left:312px;top:287px;color:#10d0d0">Girl's High</span>
<span class="t" style="left:681px;top:287px;color:#10d0d0">2006</span>
<span class="t" style="left:807px;top:287px;color:#10d0d0">Sun Television</span>
<span class="t" style="left:996px;top:287px;color:#10d0d0">6.2</span>
<span class="t" style="left:1131px;top:287px;color:#10d0d0">1</span>
<span class="t" style="left:1257px;top:287px;color:#10d0d0">Animation, Anime, Comedy</span>
<span class="t" style="left:312px;top:306px;color:#10d0d0">High School of the Dead</span>
<span class="t" style="left:681px;top:306px;color:#10d0d0">2010</span>
<span class="t" style="left:807px;top:306px;color:#10d0d0">TV Tokyo</span>
<span class="t" style="left:996px;top:306px;color:#10d0d0">7.2</span>
<span class="t" style="left:1131px;top:306px;color:#10d0d0">1</span>
<span class="t" style="left:1257px;top:306px;color:#10d0d0">Action, Animation, Anime, Drama, Fantasy, H</span>
<span class="t" style="left:312px;top:325px;color:#10d0d0">High School Fleet</span>
<span class="t" style="left:681px;top:325px;color:#10d0d0">2016</span>
<span class="t" style="left:807px;top:325px;color:#10d0d0">Tokyo MX</span>
<span class="t" style="left:996px;top:325px;color:#10d0d0">6.6</span>
<span class="t" style="left:1131px;top:325px;color:#10d0d0">1</span>
<span class="t" style="left:1257px;top:325px;color:#10d0d0">Action, Animation, Anime, Drama, Fantasy, S</span>
<span class="t" style="left:312px;top:344px;color:#10d0d0">High School Agent</span>
<span class="t" style="left:681px;top:344px;color:#10d0d0">1987</span>
<span class="t" style="left:996px;top:344px;color:#10d0d0">5.0</span>
<span class="t" style="left:1131px;top:344px;color:#10d0d0">1</span>
<span class="t" style="left:1257px;top:344px;color:#10d0d0">Action, Adventure, Animation, Anime, Comedy</span>
<span class="t" style="left:312px;top:363px;color:#10d0d0">High (School) On Sex</span>
<span class="t" style="left:681px;top:363px;color:#10d0d0">2022</span>
<span class="t" style="left:996px;top:363px;color:#10d0d0">5.7</span>
<span class="t" style="left:1131px;top:363px;color:#10d0d0">2</span>
<span class="t" style="left:1257px;top:363px;color:#10d0d0">Comedy, Drama, Romance</span>
<span class="t" style="left:312px;top:382px;color:#10d0d0">High School</span>
<span class="t" style="left:681px;top:382px;color:#10d0d0">2012</span>
<span class="t" style="left:807px;top:382px;color:#10d0d0">BBC One</span>
<span class="t" style="left:1131px;top:382px;color:#10d0d0">1</span>
<span class="t" style="left:1257px;top:382px;color:#10d0d0">Documentary, Drama</span>
<span class="t" style="left:312px;top:401px;color:#10d0d0">High School Rapper</span>
<span class="t" style="left:681px;top:401px;color:#10d0d0">2017</span>
<span class="t" style="left:807px;top:401px;color:#10d0d0">Mnet</span>
<span class="t" style="left:1131px;top:401px;color:#10d0d0">4</span>
<span class="t" style="left:1257px;top:401px;color:#10d0d0">Game Show</span>
<span class="t" style="left:312px;top:420px;color:#10d0d0">High School Stories</span>
<span class="t" style="left:681px;top:420px;color:#10d0d0">2004</span>
<span class="t" style="left:807px;top:420px;color:#10d0d0">MTV</span>
<span class="t" style="left:996px;top:420px;color:#10d0d0">8.5</span>
<span class="t" style="left:1131px;top:420px;color:#10d0d0">1</span>
<span class="t" style="left:312px;top:439px;color:#10d0d0">High School Frenemy</span>
<span class="t" style="left:681px;top:439px;color:#10d0d0">2024</span>
<span class="t" style="left:807px;top:439px;color:#10d0d0">GMM25</span>
<span class="t" style="left:1131px;top:439px;color:#10d0d0">1</span>
<span class="t" style="left:1257px;top:439px;color:#10d0d0">Action, Drama</span>
<span class="t" style="left:312px;top:458px;color:#10d0d0">High School Teacher</span>
<span class="t" style="left:681px;top:458px;color:#10d0d0">1993</span>
<span class="t" style="left:807px;top:458px;color:#10d0d0">TBS (JP)</span>
<span class="t" style="left:996px;top:458px;color:#10d0d0">8.2</span>
<span class="t" style="left:1131px;top:458px;color:#10d0d0">1</span>
<span class="t" style="left:1257px;top:458px;color:#10d0d0">Crime, Drama, Romance</span>
<span class="t" style="left:312px;top:477px;color:#10d0d0">High School Confidential</span>
<span class="t" style="left:681px;top:477px;color:#10d0d0">2008</span>
<span class="t" style="left:996px;top:477px;color:#10d0d0">8.3</span>
<span class="t" style="left:1131px;top:477px;color:#10d0d0">2</span>
<span class="t" style="left:1257px;top:477px;color:#10d0d0">Documentary, Reality</span>
<span class="t" style="left:312px;top:496px;color:#10d0d0">High School – Love On</span>
<span class="t" style="left:681px;top:496px;color:#10d0d0">2014</span>
<span class="t" style="left:807px;top:496px;color:#10d0d0">KBS 2</span>
<span class="t" style="left:996px;top:496px;color:#10d0d0">7.2</span>
<span class="t" style="left:1131px;top:496px;color:#10d0d0">1</span>
<span class="t" style="left:1257px;top:496px;color:#10d0d0">Drama, Fantasy, Romance</span>
<span class="t" style="left:312px;top:515px;color:#10d0d0">Night School</span>
<span class="t" style="left:681px;top:515px;color:#10d0d0">2017</span>
<span class="t" style="left:807px;top:515px;color:#10d0d0">Caracol TV</span>
<span class="t" style="left:996px;top:515px;color:#10d0d0">8.3</span>
<span class="t" style="left:1131px;top:515px;color:#10d0d0">2</span>
<span class="t" style="left:1257px;top:515px;color:#10d0d0">Drama, Soap</span>
<span class="t" style="left:312px;top:534px;color:#10d0d0">The High School</span>
<span class="t" style="left:681px;top:534px;color:#10d0d0">2016</span>
<span class="t" style="left:1131px;top:534px;color:#10d0d0">1</span>
<span class="t" style="left:1257px;top:534px;color:#10d0d0">Documentary, Reality</span>
<span class="t" style="left:312px;top:553px;color:#10d0d0">TO1 High School</span>
<span class="t" style="left:681px;top:553px;color:#10d0d0">2022</span>
<span class="t" style="left:1131px;top:553px;color:#10d0d0">1</span>
<span class="t" style="left:1257px;top:553px;color:#10d0d0">Reality</span>
<span class="t" style="left:312px;top:572px;color:#10d0d0">The High School Heroes</span>
<span class="t" style="left:681px;top:572px;color:#10d0d0">2021</span>
<span class="t" style="left:807px;top:572px;color:#10d0d0">TV Asahi</span>
<span class="t" style="left:996px;top:572px;color:#10d0d0">7.8</span>
<span class="t" style="left:1131px;top:572px;color:#10d0d0">1</span>
<span class="t" style="left:1257px;top:572px;color:#10d0d0">Action, Drama, Fantasy, Science Fiction</span>
<span class="t" style="left:312px;top:591px;color:#10d0d0">Highschool! Kimengumi</span>
<span class="t" style="left:681px;top:591px;color:#10d0d0">1985</span>
<span class="t" style="left:807px;top:591px;color:#10d0d0">Fuji TV</span>
<span class="t" style="left:996px;top:591px;color:#10d0d0">7.4</span>
<span class="t" style="left:1131px;top:591px;color:#10d0d0">1</span>
<span class="t" style="left:1257px;top:591px;color:#10d0d0">Animation, Anime, Comedy, Romance</span>
<span class="t" style="left:312px;top:610px;color:#10d0d0">My High School Business</span>
<span class="t" style="left:681px;top:610px;color:#10d0d0">2017</span>
<span class="t" style="left:807px;top:610px;color:#10d0d0">Nippon TV</span>
<span class="t" style="left:996px;top:610px;color:#10d0d0">6.6</span>
<span class="t" style="left:1131px;top:610px;color:#10d0d0">1</span>
<span class="t" style="left:1257px;top:610px;color:#10d0d0">Drama</span>
<span class="t" style="left:312px;top:629px;color:#10d0d0">High School Mystery Club</span>
<span class="t" style="left:681px;top:629px;color:#10d0d0">2021</span>
<span class="t" style="left:807px;top:629px;color:#10d0d0">TVING</span>
<span class="t" style="left:996px;top:629px;color:#10d0d0">8.3</span>
<span class="t" style="left:1131px;top:629px;color:#10d0d0">3</span>
<span class="t" style="left:1257px;top:629px;color:#10d0d0">Game Show, Mystery</span>
<span class="t" style="left:312px;top:648px;color:#10d0d0">All That We Loved</span>
<span class="t" style="left:681px;top:648px;color:#10d0d0">2023</span>
<span class="t" style="left:807px;top:648px;color:#10d0d0">TVING</span>
<span class="t" style="left:996px;top:648px;color:#10d0d0">7.2</span>
<span class="t" style="left:1131px;top:648px;color:#10d0d0">1</span>
<span class="t" style="left:1257px;top:648px;color:#10d0d0">Drama, Romance</span>
<span class="t" style="left:312px;top:667px;color:#10d0d0">Welcome High School Students</span>
<span class="t" style="left:681px;top:667px;color:#10d0d0">2021</span>
<span class="t" style="left:807px;top:667px;color:#10d0d0">Youku</span>
<span class="t" style="left:1131px;top:667px;color:#10d0d0">1</span>
<span class="t" style="left:1257px;top:667px;color:#10d0d0">Mini–Series</span>
<span class="t" style="left:312px;top:686px;color:#10d0d0">Be–Bop High School</span>
<span class="t" style="left:681px;top:686px;color:#10d0d0">1990</span>
<span class="t" style="left:996px;top:686px;color:#10d0d0">7.4</span>
<span class="t" style="left:1131px;top:686px;color:#10d0d0">1</span>
<span class="t" style="left:1257px;top:686px;color:#10d0d0">Anime, Comedy</span>
<span class="t" style="left:312px;top:705px;color:#10d0d0">Galaxy High School</span>
<span class="t" style="left:681px;top:705px;color:#10d0d0">1986</span>
<span class="t" style="left:807px;top:705px;color:#10d0d0">CBS</span>
<span class="t" style="left:996px;top:705px;color:#10d0d0">7.4</span>
<span class="t" style="left:1131px;top:705px;color:#10d0d0">1</span>
<span class="t" style="left:1257px;top:705px;color:#10d0d0">Animation, Children, Comedy, Family, Scienc</span>
<span class="t" style="left:312px;top:724px;color:#10d0d0">War of High School</span>
<span class="t" style="left:681px;top:724px;color:#10d0d0">2016</span>
<span class="t" style="left:807px;top:724px;color:#10d0d0">MCOT</span>
<span class="t" style="left:996px;top:724px;color:#10d0d0">6.4</span>
<span class="t" style="left:1131px;top:724px;color:#10d0d0">2</span>
<span class="t" style="left:1257px;top:724px;color:#10d0d0">Comedy, Horror, Romance, Suspense</span>
<span class="t" style="left:312px;top:743px;color:#10d0d0">The Master of High School Cafeteria</span>
<span class="t" style="left:681px;top:743px;color:#10d0d0">2019</span>
<span class="t" style="left:807px;top:743px;color:#10d0d0">tvN</span>
<span class="t" style="left:1131px;top:743px;color:#10d0d0">1</span>
<span class="t" style="left:1257px;top:743px;color:#10d0d0">Food</span>
<span class="t d" style="left:249px;top:230px;color:#243137">=&gt;</span>
<span class="t" style="left:789px;top:781px;color:#1e88f0">&lt;enter&gt; details | &lt;esc&gt; edit search</span>
<svg width="1914" height="988" viewBox="0 0 1914 988"><path d="M277.0,220.2 L278.6,222.6 L284.3,216.3" stroke="#ffffff" stroke-width="2.4" fill="none" stroke-linecap="round" stroke-linejoin="round"/><circle cx="277.8" cy="221.2" r="1.7" fill="#ffffff"/><path d="M277.2,239.0 L278.6,241.5 L283.8,235.4" stroke="#243137" stroke-width="1.5" fill="none" stroke-linecap="round" stroke-linejoin="round"/></svg>
</div></div></body></html>
